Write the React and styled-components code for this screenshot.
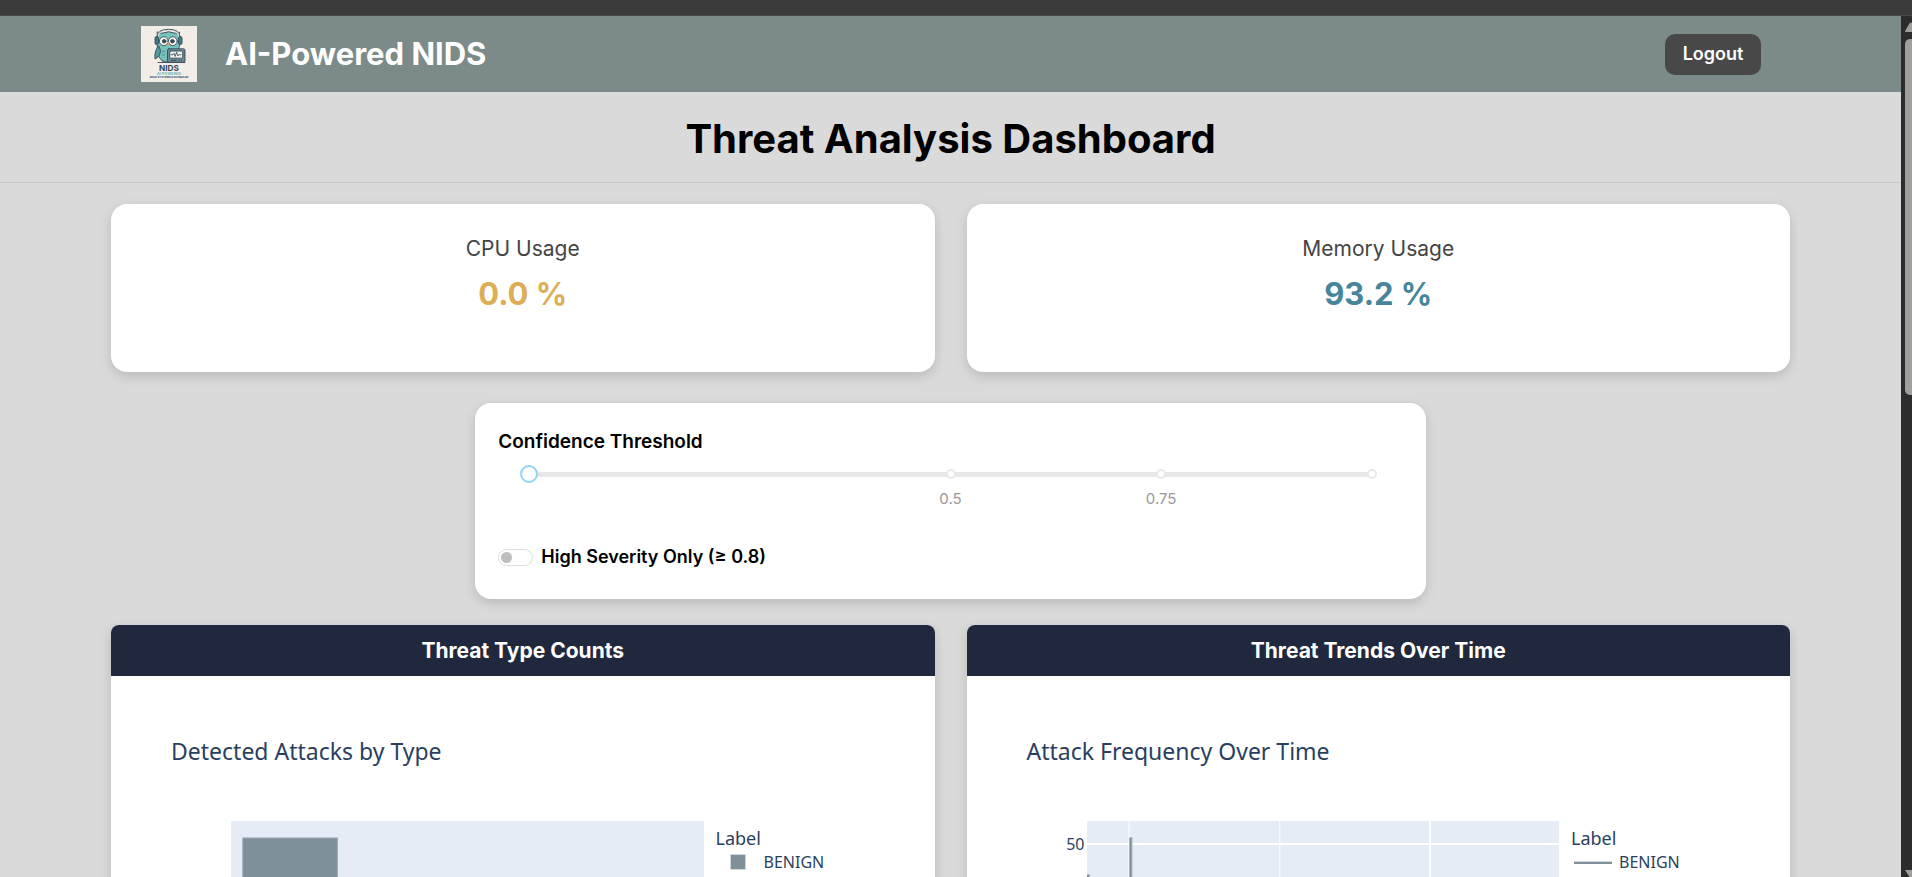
import React, { useState } from "react";
import styled, { createGlobalStyle } from "styled-components";

const GlobalStyle = createGlobalStyle`
  *, *::before, *::after { box-sizing: border-box; }
  html, body, #root { height: 100%; }
  body {
    margin: 0;
    background: #dadada;
    color: #000;
    font-family: Inter, "Open Sans", sans-serif;
  }
  h1, h2, h3, p { margin: 0; }
`;

const Window = styled.div`
  display: flex;
  flex-direction: column;
  height: 100vh;
`;

const TopStrip = styled.div`
  flex: 0 0 16px;
  background: #3b3b3b;
  border-bottom: 1px solid #4b4b4b;
`;

const Viewport = styled.div`
  display: flex;
  flex: 1;
  min-height: 0;
`;

const Page = styled.div`
  flex: 1;
  min-width: 0;
  overflow-y: auto;
  scrollbar-width: none;
`;

const ScrollTrack = styled.div`
  display: flex;
  flex-direction: column;
  justify-content: space-between;
  flex: 0 0 11px;
  overflow: hidden;
  background: #2c2c2c;
  padding: 6px 0 0 4px;
`;

const ScrollThumb = styled.div`
  height: 356px;
  margin: 7px 0 auto;
  background: #9f9f9e;
  border-radius: 5px 0 0 5px;
`;

const Header = styled.header`
  display: flex;
  align-items: center;
  justify-content: space-between;
  height: 76px;
  padding: 0 140px 0 141px;
  background: #7b8b89;
`;

const Brand = styled.div`
  display: flex;
  align-items: center;
  gap: 28px;
  color: #fff;
`;

const BrandName = styled.h2`
  font-size: 31px;
  line-height: 40px;
  font-weight: 700;
`;

const LogoutButton = styled.button`
  width: 96px;
  height: 41px;
  padding: 0;
  border: 0;
  border-radius: 10px;
  background: #484848;
  color: #fff;
  font: 600 18px/24px Inter, "Open Sans", sans-serif;
  cursor: pointer;
`;

const TitleBar = styled.div`
  padding: 24px 0 20px;
  border-bottom: 1px solid #c7c7c7;
  text-align: center;
`;

const PageTitle = styled.h1`
  font-size: 40px;
  line-height: 46px;
  font-weight: 700;
`;

const Columns = styled.section`
  display: grid;
  grid-template-columns: 1fr 1fr;
  gap: 32px;
  padding: 0 111px;
`;

const Main = styled.main`
  padding: 21px 0 32px;
`;

const Card = styled.div`
  background: #fff;
  border-radius: 16px;
  box-shadow: 0 4px 12px rgba(0, 0, 0, 0.15);
`;

const StatCard = styled(Card)`
  min-height: 168px;
  padding: 32px 24px;
  text-align: center;
`;

const StatLabel = styled.h3`
  font-size: 21px;
  line-height: 26px;
  font-weight: 400;
  color: #444;
`;

const StatValue = styled.p`
  margin-top: 12px;
  font-size: 31px;
  line-height: 40px;
  font-weight: 700;
  color: ${(p) => p.$color};
`;

const FilterCard = styled(Card)`
  width: 50%;
  margin: 31px auto 26px;
  padding: 27px 23px 30px;
`;

const FilterTitle = styled.label`
  display: block;
  font-size: 19px;
  line-height: 24px;
  font-weight: 600;
`;

const SliderBox = styled.div`
  position: relative;
  height: 42px;
  margin: 11px 22px 38px;
`;

const Range = styled.input`
  appearance: none;
  display: block;
  width: 100%;
  height: 18px;
  margin: 0;
  background: linear-gradient(#e8e8e8, #e8e8e8) center / calc(100% - 18px) 5px no-repeat;
  cursor: pointer;

  &::-webkit-slider-thumb {
    appearance: none;
    width: 18px;
    height: 18px;
    border: 2px solid #91d5f8;
    border-radius: 50%;
    background: #fff;
  }
`;

const Marks = styled.div`
  position: absolute;
  inset: 4px 9px 0;
  pointer-events: none;
`;

const Mark = styled.span`
  position: absolute;
  top: 0;
  left: ${(p) => p.$at}%;
  display: flex;
  flex-direction: column;
  align-items: center;
  gap: 10px;
  width: 60px;
  margin-left: -30px;
  color: #999;
  font-size: 15px;
  line-height: 20px;

  &::before {
    content: "";
    width: 10px;
    height: 10px;
    border: 2px solid #e8e8e8;
    border-radius: 50%;
    background: #fff;
  }
`;

const SwitchLabel = styled.label`
  display: flex;
  align-items: center;
  gap: 8px;
  font-size: 18px;
  line-height: 24px;
  font-weight: 600;
`;

const Switch = styled.input`
  appearance: none;
  width: 35px;
  height: 17px;
  margin: 0;
  padding: 2px;
  border: 1px solid #dedee3;
  border-radius: 9px;
  background: #fff;
  cursor: pointer;

  &::before {
    content: "";
    display: block;
    width: 11px;
    height: 11px;
    border-radius: 50%;
    background: #bfbfbf;
  }
  &:checked::before { margin-left: auto; background: #91d5f8; }
`;

const ChartCard = styled(Card)`
  border-radius: 8px;
  overflow: hidden;
`;

const ChartHeading = styled.h2`
  background: #20283d;
  color: #fff;
  font-size: 21px;
  line-height: 51px;
  font-weight: 700;
  text-align: center;
`;

const Chart = styled.figure`
  margin: 0;
  padding: 60px 0 40px;
  font-family: "Noto Sans", Verdana, sans-serif;
  color: #2a3f5f;
`;

const ChartTitle = styled.figcaption`
  padding-left: 60px;
  font-size: 23px;
  line-height: 30px;
`;

const ChartGrid = styled.div`
  display: grid;
  grid-template-columns: 120px 1fr 231px;
  height: 350px;
  margin-top: 55px;
`;

const AxisLabels = styled.div`
  padding: 14px 2px 0 0;
  text-align: right;
  font-size: 16px;
  line-height: 18px;
`;

const Plot = styled.svg`
  display: block;
  width: 100%;
  height: 100%;
  background: #e5ecf6;
`;

const Legend = styled.div`
  padding: 6px 0 0 12px;
`;

const LegendTitle = styled.p`
  font-size: 18px;
  line-height: 22px;
`;

const LegendItem = styled.div`
  display: flex;
  align-items: center;
  gap: 7px;
  padding-left: 3px;
  font-size: 16px;
  line-height: 26px;
`;

const Swatch = styled.span`
  width: 38px;
  display: flex;
  justify-content: center;

  &::before {
    content: "";
    width: ${(p) => (p.$line ? "38px" : "16px")};
    height: ${(p) => (p.$line ? "3px" : "16px")};
    border: solid #cfd8e3;
    border-width: ${(p) => (p.$line ? "1px 0 0" : "1px")};
    background: #7f9098;
  }
`;

function OwlLogo() {
  const ink = "#33495a";
  return (
    <svg width="56" height="56" viewBox="0 0 56 56" role="img" aria-label="NIDS logo">
      <rect width="56" height="56" fill="#f2ede6" />
      <g stroke={ink} strokeWidth="0.9" strokeLinejoin="round" strokeLinecap="round">
        <path d="M16.5 6 Q20 8 22 7 Q28 4.5 33 7 Q36 8 38.5 6 L38.5 19 Q38 23 36.5 26 Q36 36 27 36 Q18 36 17 27 Q15.500 20 16.500 16 Z" fill="#76c3bc" />
        <path d="M17.500 20 Q13 25 14 33 Q19 31 19.500 25 Z" fill="#4f9c9b" />
        <path d="M16.500 11 Q17 3.800 27.500 3.800 Q38 3.800 38.500 11" fill="none" stroke="#e8e5e0" strokeWidth="2" />
        <path d="M16 11 Q16 3.300 27.500 3.300 Q39 3.300 39 11" fill="none" />
        <rect x="14" y="10.500" width="3.500" height="8" rx="1.600" fill="#3f7f86" />
        <rect x="37.500" y="10.500" width="3.500" height="8" rx="1.600" fill="#3f7f86" />
        <circle cx="22.800" cy="15.200" r="4.400" fill="#fbf8f2" />
        <circle cx="31.800" cy="15.200" r="4.400" fill="#fbf8f2" />
        <circle cx="23.200" cy="15.200" r="1.800" fill={ink} />
        <circle cx="31.400" cy="15.200" r="1.800" fill={ink} />
        <path d="M26.200 16.500 L28.600 16.500 L27.400 20 Z" fill="#e7a95b" stroke="none" />
        <path d="M21 25 l1.500 1 1.500 -1 M21 28.500 l1.500 1 1.500 -1" fill="none" strokeWidth="0.500" />
        <path d="M17 36.500 H44" />
        <path d="M21 36 q1 -2 2 0 q1 -2 2 0" fill="#e7a95b" strokeWidth="0.500" />
        <rect x="26.500" y="22.800" width="17.500" height="13.500" rx="1.500" fill="#6f8b93" />
        <rect x="28.700" y="25" width="13" height="7.200" rx="0.800" fill="#f4f1ea" />
        <path d="M30 28.700 h2 l1 -1.500 1.200 3.300 1.400 -4.500 1.300 4 1 -1.300 h2" fill="none" strokeWidth="0.800" />
        <path d="M30 34.300 h5 M38 34.300 h0.500 M40.500 34.300 h0.500" fill="none" />
      </g>
      <g textAnchor="middle" fontFamily="Inter, sans-serif" fontWeight="700">
        <text x="28" y="44.700" fontSize="8.200" fill={ink}>NIDS</text>
        <text x="28" y="48.600" fontSize="3.800" fill="#6fb9bd">AI POWERED</text>
        <text x="28" y="52" fontSize="2.700" fill={ink}>EDGE SYSTEMS DASHBOARD</text>
      </g>
    </svg>
  );
}

function BarPlot() {
  return (
    <Plot aria-label="BENIGN bar">
      <rect x="2.500%" y="17" width="20%" height="340" fill="#7f9098" stroke="#96a5ae" />
    </Plot>
  );
}

function LinePlot() {
  return (
    <Plot aria-label="BENIGN frequency">
      <g fill="#fff">
        <rect x="8.800%" y="0" width="1" height="100%" />
        <rect x="40.700%" y="0" width="1" height="100%" />
        <rect x="72.400%" y="0" width="2" height="100%" />
        <rect x="0" y="22" width="100%" height="2" />
      </g>
      <g fill="#b4c0c9">
        <rect x="9%" y="16" width="3" height="100%" />
        <rect x="0" y="53" width="3" height="100%" />
      </g>
      <g fill="#7f9098">
        <rect x="9%" y="17" width="2" height="100%" />
        <rect x="0" y="54" width="2" height="100%" />
      </g>
    </Plot>
  );
}

function ChartPanel({ heading, title, tick, line, children }) {
  return (
    <ChartCard>
      <ChartHeading>{heading}</ChartHeading>
      <Chart>
        <ChartTitle>{title}</ChartTitle>
        <ChartGrid>
          <AxisLabels>{tick}</AxisLabels>
          {children}
          <Legend>
            <LegendTitle>Label</LegendTitle>
            <LegendItem>
              <Swatch $line={line} />
              BENIGN
            </LegendItem>
          </Legend>
        </ChartGrid>
      </Chart>
    </ChartCard>
  );
}

export default function App() {
  const [threshold, setThreshold] = useState(0);
  const [highOnly, setHighOnly] = useState(false);

  return (
    <Window>
      <GlobalStyle />
      <TopStrip />
      <Viewport>
        <Page>
          <Header>
            <Brand>
              <OwlLogo />
              <BrandName>AI-Powered NIDS</BrandName>
            </Brand>
            <LogoutButton type="button">Logout</LogoutButton>
          </Header>
          <TitleBar>
            <PageTitle>Threat Analysis Dashboard</PageTitle>
          </TitleBar>
          <Main>
            <Columns>
              <StatCard>
                <StatLabel>CPU Usage</StatLabel>
                <StatValue $color="#dcae55">0.0 %</StatValue>
              </StatCard>
              <StatCard>
                <StatLabel>Memory Usage</StatLabel>
                <StatValue $color="#46859a">93.2 %</StatValue>
              </StatCard>
            </Columns>
            <FilterCard>
              <FilterTitle htmlFor="threshold">Confidence Threshold</FilterTitle>
              <SliderBox>
                <Range
                  id="threshold"
                  type="range"
                  min="0"
                  max="1"
                  step="0.01"
                  value={threshold}
                  onChange={(e) => setThreshold(Number(e.target.value))}
                />
                <Marks>
                  <Mark $at={50}>0.5</Mark>
                  <Mark $at={75}>0.75</Mark>
                  <Mark $at={100} />
                </Marks>
              </SliderBox>
              <SwitchLabel>
                <Switch
                  type="checkbox"
                  role="switch"
                  checked={highOnly}
                  onChange={(e) => setHighOnly(e.target.checked)}
                />
                High Severity Only (≥ 0.8)
              </SwitchLabel>
            </FilterCard>
            <Columns>
              <ChartPanel heading="Threat Type Counts" title="Detected Attacks by Type">
                <BarPlot />
              </ChartPanel>
              <ChartPanel heading="Threat Trends Over Time" title="Attack Frequency Over Time" tick="50" line>
                <LinePlot />
              </ChartPanel>
            </Columns>
          </Main>
        </Page>
        <ScrollTrack aria-hidden="true">
          <svg width="12" height="10" viewBox="0 0 12 10">
            <path d="M0 9 L4.500 1.500 Q6 -0.500 7.500 1.500 L12 9 Q12 10 11 10 H1 Q0 10 0 9 Z" fill="#9f9f9e" />
          </svg>
          <ScrollThumb />
          <svg width="12" height="7" viewBox="0 0 12 7">
            <path d="M0 0 H12 L7.500 7 H4.500 Z" fill="#9f9f9e" />
          </svg>
        </ScrollTrack>
      </Viewport>
    </Window>
  );
}
